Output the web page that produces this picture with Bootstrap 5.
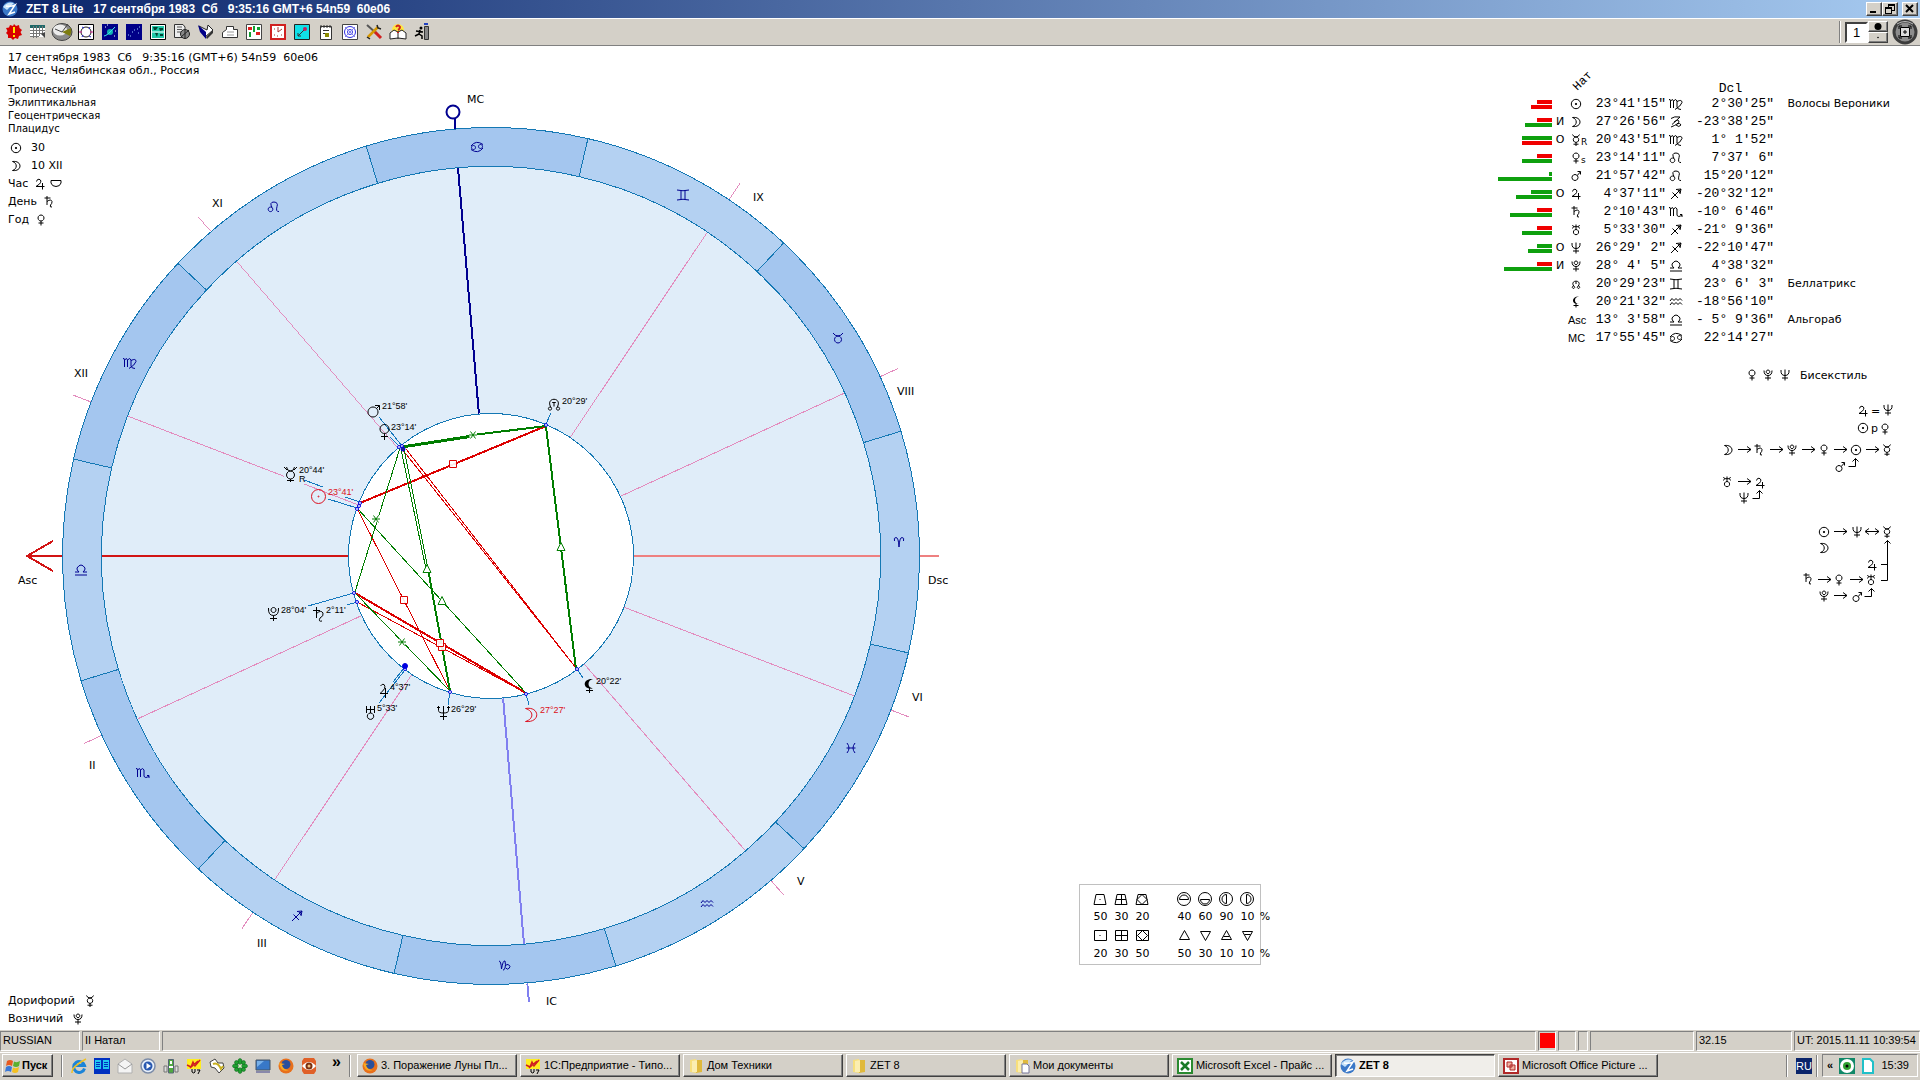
<!DOCTYPE html>
<html lang="ru">
<head>
<meta charset="utf-8">
<meta name="viewport" content="width=device-width, initial-scale=1">
<title>ZET 8 Lite</title>
<link rel="stylesheet" href="https://cdn.jsdelivr.net/npm/bootstrap@5.3.0/dist/css/bootstrap.min.css">
<style>
:root{--face:#d4d0c8;--shade:#808080;--dark:#404040}
body{font:11px/13px "DejaVu Sans",Verdana,sans-serif;color:#000;background:#fff}
button,input{font:inherit;color:#000;border-radius:0}
.ui{font:11px/13px "Liberation Sans",Arial,sans-serif}
.titlebar{height:18px;background:linear-gradient(90deg,#0a246a,#a6caf0);color:#fff;font:bold 12px/16px "Liberation Sans",Arial,sans-serif;white-space:pre;padding:0 2px 0 2px}
.raised{background:var(--face);border:1px solid;border-color:#fff var(--dark) var(--dark) #fff;box-shadow:inset -1px -1px 0 var(--shade);padding:0}
.sunken{border:1px solid;border-color:var(--shade) #fff #fff var(--shade)}
.capbtn{width:16px;height:14px}
.toolbar{height:28px;background:var(--face);border-top:1px solid #fff;border-bottom:1px solid var(--shade);padding:0 2px 0 2px}
.tool{width:24px;height:24px;border:0;background:none;padding:0}
.tool svg,.quick svg,.task svg,.start svg{display:block}
.pagebox{width:23px;height:21px;border:2px solid;border-color:var(--dark) #fff #fff var(--dark);padding:0 0 0 6px;background:#fff;font-size:13px}
.spin{width:20px;height:11px}
.ink{fill:none;stroke:#000;stroke-width:1}
.gl{width:16px;height:16px;display:inline-block;vertical-align:middle;fill:none;stroke:#000;overflow:visible}
.stack{grid-area:1/1}
.chart{height:100%;width:auto;max-width:100%}
.info{padding:5px 8px 2px;white-space:pre;z-index:1}
.fine{font-size:10px;margin-top:6px}
.rowline{height:18px;line-height:18px}
.planets{width:420px;margin-top:28px;border-collapse:collapse;table-layout:fixed}
.planets td,.planets th{padding:0;height:18px;line-height:18px;font-weight:normal;white-space:pre}
.planets thead th{height:21px;line-height:12px;vertical-align:bottom}
.planets .num{font-family:"Liberation Mono","Courier New",monospace;font-size:13px;text-align:right}
.tilt{display:block;width:22px;transform:rotate(-45deg);font-family:"Liberation Mono","Courier New",monospace;font-size:12px;line-height:12px;margin-bottom:8px;margin-left:4px}
.bars{display:flex;flex-direction:column;align-items:flex-end;gap:1px}
.bars i{height:4px;background:#0ea00e}
.bars i.r{background:#f00000}
.sub{font-size:9px;margin-left:-3px}
.stats{display:grid;grid-template-columns:repeat(8,21px) 14px;width:182px;height:81px;border:1px solid #c0c0c0;padding:6px 0 0 10px;margin:0 0 65px 119px;text-align:center}
.stats svg{width:21px;height:18px;fill:none;stroke:#000}
.stats span{height:18px;line-height:15px}
.status{height:22px;background:var(--face);padding-top:1px;gap:2px}
.status>div{height:20px;padding:2px;white-space:nowrap}
.taskbar{height:28px;background:var(--face);border-top:1px solid #fff;padding:0 2px 2px}
.start{width:51px;height:23px;font-weight:bold;gap:1px;padding-left:2px}
.sep{width:2px;height:22px;border-left:1px solid var(--shade);border-right:1px solid #fff}
.quick a{width:23px}
.tasks{gap:3px;padding-left:2px}
.task{width:160px;height:23px;padding:0 4px;gap:3px;text-align:left;white-space:nowrap}
.task.on{border-color:var(--dark) #fff #fff var(--dark);background:#f0eeea;box-shadow:inset 1px 1px 0 var(--shade);font-weight:bold}
.lang{background:#0a246a;color:#fff;width:16px;height:16px;line-height:16px;text-align:center}
.tray{width:96px;height:23px;padding:0 4px}
.ring{stroke:#1478b4;fill:none}
.sg{stroke:#000090;fill:none}
.cusp{stroke:#e38cbe}
.lead1{stroke:#1478be}
.gr{stroke:#007d00}
.rd{stroke:#dc0000}
.deg{font:9px "Liberation Sans",Arial,sans-serif}
.mk{fill:#fff;fill-opacity:.9}
.dots{fill:#fff;stroke:#0000e0}
.crisp{shape-rendering:crispEdges}
</style>
<script src="https://cdn.jsdelivr.net/npm/bootstrap@5.3.0/dist/js/bootstrap.bundle.min.js"></script>
</head>
<body class="vh-100 d-flex flex-column overflow-hidden">

<svg width="0" height="0" class="position-absolute" aria-hidden="true">
<defs>
<g id="sun"><circle r="4.700"/><circle r=".7" fill="currentColor"/></g>
<path id="moon" d="M-3.500-4.500C6.500-5.800 6.500 5.800-3.500 4.500C1.500 3 1.500-3-3.500-4.500Z"/>
<path id="mercury" d="M-3.500-5.500Q-2.500-3 0-3Q2.500-3 3.500-5.500M0-3A2.700 2.700 0 1 0 .01-3M0 2.400V6M-2.500 4.200H2.500"/>
<path id="venus" d="M0-5A3 3 0 1 0 .01-5M0 1V5.500M-2.500 3H2.500"/>
<path id="mars" d="M-1-1.500A3 3 0 1 0-.99-1.500M1.200-.5L4.500-4.200M1.500-4.500H4.500V-1.500"/>
<path id="jupiter" d="M-3.500-2.500Q-3-5-1-4.800Q2.500-3.500-.5 0L-4 2.500H4.500M2.500-1V5.500"/>
<path id="saturn" d="M-2-6V3M-4.500-4H1.500M-2-.5Q2-3.500 3-.5Q3.200 1.500 1.500 3Q.5 5.500 3 5"/>
<path id="uranus" d="M-3.500-5Q-1.500-3.500-3.500-1.500M3.500-5Q1.500-3.500 3.500-1.500M-2.500-3.300H2.500M0-5.500V-.5M0-.5A2.600 2.600 0 1 0 .01-.5"/>
<path id="neptune" d="M-4-5Q-4.500 .5 0 .5Q4.500 .5 4-5M0-5.500V5.500M-3 3H3"/>
<path id="pluto" d="M0-5A1.800 1.800 0 1 0 .01-5M-4-4.500Q-4 .5 0 .5Q4 .5 4-4.500M0 .5V5.500M-3 3H3"/>
<path id="node" d="M-2.300 2C-6.500-4.500 6.500-4.500 2.300 2M-2.500 2A1.200 1.200 0 1 0-2.490 2M2.500 2A1.200 1.200 0 1 0 2.510 2M0-2.500V0"/>
<path id="nodebig" d="M-3 3.500C-9.500-7.500 9.500-7.500 3 3.500M-4 3A1.600 1.600 0 1 0-3.990 3M4 3A1.600 1.600 0 1 0 4.010 3M-1.800-1.500H1.800M0-1.500V2.500"/>
<g id="lilith"><path fill="currentColor" stroke="none" d="M3-5.500C-5-6-5 3 3 2Q-1 1.500-1-1.800Q-1-5 3-5.500Z"/><path d="M0 1.500V5.500M-2.500 3.500H2.500"/></g>
<path id="aries" d="M-4.500-1Q-5.500-4.500-3-4.500Q-.5-4.500 0 5Q.5-4.500 3-4.500Q5.500-4.500 4.500-1"/>
<path id="taurus" d="M-5-5Q-3-2 0-2Q3-2 5-5M0-2A3.500 3.500 0 1 0 .01-2"/>
<path id="gemini" d="M-6-5Q0-3.500 6-5M-6 5Q0 3.500 6 5M-2-4V4M2-4V4"/>
<path id="cancer" d="M-6-1Q-1-7.500 6-2.500M6 1Q1 7.500-6 2.500M-3.500-1.500A2 2 0 1 0-3.490-1.500M3.500-2.500A2 2 0 1 0 3.510-2.500"/>
<path id="leo" d="M-3.500 0A2.300 2.300 0 1 0-3.490 0M-2 .5Q-5-5 0-5Q4.500-4.500 3-.5Q1.500 5 5 4.500"/>
<path id="virgo" d="M-7-4.500Q-5.500-5-5.500-3V4M-5.500-3Q-3-6-2.500-3V4M-2.500-3Q0-6 1-3V3Q1.500 5.500 5 5.500M1-2.500Q6-5 6-1.500Q5 2-1 5.500"/>
<path id="libra" d="M-6 5H6M-6 2H-2Q-4.500 0-4-2Q-2-5 0-5Q2-5 4-2Q4.500 0 2 2H6"/>
<path id="scorpio" d="M-7-4.500Q-5.500-5-5.500-3V4M-5.500-3Q-3-6-2.500-3V4M-2.500-3Q0-6 1-3V3Q2 6 6 3M4 2.500L6 2.500V5"/>
<path id="sagittarius" d="M-5 5L5-5M0-4.500L5-5L4 0M-3.500-1.500L2 4M2-4L4-1"/>
<path id="capricorn" d="M-5-4Q-3-4-2.500 4Q-1-5 1-4Q2 0 1 3Q0 5.500-1 5M1.500 1A2.200 2.200 0 1 1 1.800 3"/>
<path id="capricorn2" d="M-5-3.500Q-2-6 4-5L-4 2.500M-2 0Q2-3 3-1Q3 2-5 5M1 2Q4 0 5 3Q3 6 0 3"/>
<path id="aquarius" d="M-6-1L-4-3.500L-2-1.500L0-3.500L2-1.500L4-3.500L6-1.500M-6 3L-4 .5L-2 2.500L0 .5L2 2.500L4 .5L6 2.500"/>
<path id="pisces" d="M-4-5Q0 0-4 5M4-5Q0 0 4 5M-4.500 0H4.500"/>
<path id="ar" d="M0 0H13M9-3L13 0L9 3"/>
<path id="hook" d="M-7 8H0V0M-3 3L0 0L3 3"/>
<path id="sq" d="M-3.500-3.500H3.500V3.500H-3.500Z"/>
<path id="tri" d="M0-4.500L4 3.500H-4Z"/>
<path id="star" d="M-4 0H4M-2.500-3.500L2.500 3.500M2.500-3.500L-2.500 3.500"/>
<path id="sector" d="M428.500 0A428.500 428.500 0 0 0 371.100-214.250L337.300-194.750A389.500 389.500 0 0 1 389.500 0Z"/>
<g id="orb"><circle cx="8" cy="8" r="7.500" fill="#3a78c8"/><path d="M1 6Q5 0 12 2L5 9Z" fill="#c8e4fa"/><path d="M4 5Q9 6 13 4L7 13L13 11" fill="none" stroke="#fff" stroke-width="1.500"/></g>
<g id="fox"><circle cx="8" cy="8" r="7.500" fill="#e8701c"/><circle cx="8" cy="6.500" r="4.500" fill="#2a4f9c"/><path d="M1 5Q3 15 11 12Q5 12 4 7L7 6Z" fill="#f8a820"/></g>
<g id="onec"><path d="M1 1H15V11H1Z" fill="#ffee20"/><path d="M1 7L5 9L7 4L9 8L14 2M4 10L12 3" stroke="#d02020" stroke-width="1.500" fill="none"/><path d="M6 11V14Q8 16 9 14V11M11 12H14L12 16" stroke="#000" fill="none"/></g>
<g id="folder"><path d="M2 2L8 1V15L2 14Z" fill="#f7df7c"/><path d="M8 2H14V14L8 15Z" fill="#e0b93c"/><path d="M4 3L9 2V14H4Z" fill="#fbeeb0"/></g>
</defs>
</svg>

<header class="titlebar d-flex align-items-center flex-shrink-0">
  <svg width="16" height="16" viewBox="0 0 16 16" class="me-2"><use href="#orb"/></svg><span class="flex-grow-1">ZET 8 Lite   17 сентября 1983  Сб   9:35:16 GMT+6 54n59  60e06</span>
  <button class="raised capbtn d-flex" aria-label="Свернуть"><svg width="14" height="12"><path d="M3 9H9" stroke="#000" stroke-width="2"/></svg></button>
  <button class="raised capbtn d-flex me-1" aria-label="Восстановить"><svg width="14" height="12" class="ink crisp"><path d="M5 4V1.500H11V7H9M5 2.500H11M2.500 4.500H8.500V10H2.500ZM2.500 5.500H8.500"/></svg></button>
  <button class="raised capbtn d-flex" aria-label="Закрыть"><svg width="14" height="12"><path d="M3 2L10 9M10 2L3 9" stroke="#000" stroke-width="2"/></svg></button>
</header>

<nav class="toolbar d-flex align-items-center flex-shrink-0" aria-label="Инструменты">
  <button class="tool" aria-label="Стоп"><svg width="24" height="24" viewBox="-4 -4 24 24"><path d="M8 0L10 2L13 1L13.500 4L16 6L14.500 8L16 11L13 12L12 15L9 14L7 16L5 14L2 14L2 11L0 9L1.500 7L0 4L3 3.500L4 1L7 2Z" fill="#d80000"/><path d="M8 3V9M8 11V13" stroke="#ffe800" stroke-width="2"/></svg></button>
  <button class="tool" aria-label="Таблица"><svg width="24" height="24" viewBox="-4 -4 24 24"><path d="M0 1H15V13H0Z" fill="#fff"/><path d="M0 1H15V4H0Z" fill="#206868"/><path d="M0 6.500H15M0 9.500H12M0 12.500H9M3.500 2V14M6.500 2V14M9.500 2V12M12.500 2V10" stroke="#777"/><path d="M11 10L15 14V8" fill="#444"/></svg></button>
  <button class="tool" aria-label="Радар"><svg width="24" height="24" viewBox="-4 -4 24 24"><ellipse cx="8" cy="8" rx="10" ry="8.500" fill="#8a8a8a" stroke="#444"/><ellipse cx="6" cy="6" rx="7" ry="5.500" fill="#ececec"/><path d="M8 8L17 4Q18 8 16 12Z" fill="#7c7c10"/><path d="M14 0L8 8L1 5" stroke="#444" fill="none"/></svg></button>
  <button class="tool" aria-label="Карта"><svg width="24" height="24" viewBox="-4 -4 24 24"><path d="M.5 .5H15.500V15.500H.5Z" fill="#fff" stroke="#000"/><circle cx="8" cy="8" r="5" fill="none" stroke="#222"/><path d="M1 8H4M12 8H15" stroke="#d02090"/><path d="M4 3L6 4M11 12L13 13M4 13L5 11M12 3L11 5" stroke="#2020d0"/></svg></button>
  <button class="tool" aria-label="Планета"><svg width="24" height="24" viewBox="-4 -4 24 24"><path d="M0 0H16V16H0Z" fill="#000088"/><circle cx="8" cy="8" r="3" fill="#10b0b0"/><path d="M2 12Q5 12 13 3" stroke="#40f0f0" fill="none"/><path d="M3 3h1M12 12h1M5 1h1M13 7h1" stroke="#fff"/></svg></button>
  <button class="tool" aria-label="Небо"><svg width="24" height="24" viewBox="-4 -4 24 24"><path d="M0 0H16V16H0Z" fill="#000088"/><path d="M2 11h1M4 12h1M6 8h1M8 6h1M11 5h1M13 3h1M12 9h1" stroke="#9cf"/></svg></button>
  <button class="tool" aria-label="Атлас"><svg width="24" height="24" viewBox="-4 -4 24 24"><path d="M.5 .5H15.500V15.500H.5Z" fill="#fff" stroke="#000"/><path d="M2 2H14V14H2Z" fill="#20c8a8"/><path d="M3 3H8L6 6H4ZM9 4H13V6L10 7ZM5 9H8L7 13ZM10 10H13V12H10Z" fill="#043"/><path d="M2 8H14" stroke="#fff"/></svg></button>
  <button class="tool" aria-label="Документ"><svg width="24" height="24" viewBox="-4 -4 24 24"><path d="M.5 .5H9L11 3V13.500H.5Z" fill="#eee" stroke="#333"/><path d="M3 3H8M3 5.500H8M3 8H8" stroke="#555"/><circle cx="11" cy="10" r="4.500" fill="#888" stroke="#222"/><path d="M7 13L15 6M11 6V15" stroke="#222"/></svg></button>
  <button class="tool" aria-label="Книга"><svg width="24" height="24" viewBox="-4 -4 24 24"><path d="M1 2L7 13L15 6L10 1L9 6Z" fill="#fff" stroke="#222"/><path d="M0 1L8 8V15L2 8Z" fill="#000088"/><path d="M9 15L15 9V6L8 13Z" fill="#333"/></svg></button>
  <button class="tool" aria-label="Папка"><svg width="24" height="24" viewBox="-4 -4 24 24"><path d="M4.500 2.500H11.500V5.500H15.500V13.500H.5V8.500L4.500 5.500Z" fill="#fff" stroke="#333"/><path d="M5 8H12M5 11H12" stroke="#999"/></svg></button>
  <button class="tool" aria-label="Аспекты"><svg width="24" height="24" viewBox="-4 -4 24 24"><path d="M.5 .5H15.500V15.500H.5Z" fill="#fff" stroke="#444"/><path d="M2 3H6V6H2ZM10 8H14V11H10Z" fill="#e02020"/><path d="M7 2H9V8H7ZM11 3H14V6H11ZM3 8H5V13H3Z" fill="#10a030"/></svg></button>
  <button class="tool" aria-label="График"><svg width="24" height="24" viewBox="-4 -4 24 24"><path d="M1 1H15V15H1Z" fill="#fff" stroke="#d02020" stroke-width="2"/><path d="M8 3V8L12 5M4 5h1M4 11h1M11 11h1M7 12h1" stroke="#a33" fill="none"/></svg></button>
  <button class="tool" aria-label="Связь"><svg width="24" height="24" viewBox="-4 -4 24 24"><path d="M.5 .5H15.500V15.500H.5Z" fill="#10e0e8" stroke="#222"/><path d="M4 12L11 5M4 9V12H7" stroke="#333" fill="none"/><circle cx="11" cy="5" r="2" fill="#c02060"/></svg></button>
  <button class="tool" aria-label="Заметки"><svg width="24" height="24" viewBox="-4 -4 24 24"><path d="M2.500 2.500H13.500V15.500H2.500Z" fill="#fff" stroke="#333"/><path d="M3 1V4M6 1V4M9 1V4M12 1V4M5 6.500H11M5 9.500H8" stroke="#333"/><path d="M7 9H11V13H7Z" fill="#8b8b00"/></svg></button>
  <button class="tool" aria-label="Круг"><svg width="24" height="24" viewBox="-4 -4 24 24"><path d="M.5 .5H15.500V15.500H.5Z" fill="#fff" stroke="#444"/><circle cx="8" cy="8" r="5.500" fill="none" stroke="#3030e0"/><circle cx="8" cy="8" r="2.500" fill="none" stroke="#3030e0"/><path d="M3 3L13 13M13 3L3 13" stroke="#8080f0"/></svg></button>
  <button class="tool" aria-label="Настройки"><svg width="24" height="24" viewBox="-4 -4 24 24"><path d="M1 1L10 9" stroke="#555" stroke-width="2"/><path d="M9 8L15 14" stroke="#d02020" stroke-width="3"/><path d="M12 3L2 13" stroke="#d89800" stroke-width="2.500"/><path d="M11 1L12 4L15 5M1 13L4 15" stroke="#222" stroke-width="1.500" fill="none"/></svg></button>
  <button class="tool" aria-label="Справка"><svg width="24" height="24" viewBox="-4 -4 24 24"><circle cx="8" cy="6" r="6" fill="#ffe640"/><path d="M0 9L4 6L8 8L12 6L16 9V15L8 14L0 15Z" fill="#fff" stroke="#222"/><path d="M8 9V15" stroke="#222"/><path d="M6 3Q8 0 10 3Q10 5 8 6M8 8V9" stroke="#d02020" stroke-width="2" fill="none"/></svg></button>
  <button class="tool" aria-label="Выход"><svg width="24" height="24" viewBox="-4 -4 24 24"><path d="M10.500 2.500H14.500V15.500H10.500Z" fill="#888" stroke="#333"/><path d="M10 0h4" stroke="#2040c0" stroke-width="2"/><path d="M6 6L5 10L8 12V15M5 10L1 12M2 7L9 8" stroke="#000" stroke-width="1.500" fill="none"/><circle cx="7" cy="4" r="1.500"/></svg></button>
  <div class="ms-auto d-flex align-items-center ui">
    <div class="sep me-1"></div>
    <input class="pagebox" type="text" value="1" aria-label="Номер карты">
    <div class="d-flex flex-column me-1"><button class="raised spin d-flex justify-content-center" aria-label="Больше"><svg width="10" height="9"><circle cx="5" cy="4.500" r="3.500"/></svg></button><button class="raised spin d-flex justify-content-center" aria-label="Меньше"><svg width="10" height="9"><circle cx="5" cy="4.500" r=".8"/></svg></button></div>
    <svg width="26" height="26" viewBox="-13 -13 26 26"><circle r="12.500" fill="#3c3c3c"/><circle r="9.500" fill="#8c8c8c"/><path d="M-8-8Q0-13 8-8" stroke="#bbb" fill="none"/><path d="M-4.500-4.500H4.500V4.500H-4.500Z" fill="#ddd" stroke="#000"/><path d="M-2 0H2M0-2V2M-6-3V-6H-3M3-6H6V-3M6 3V6H3M-3 6H-6V3" stroke="#000" fill="none"/></svg>
  </div>
</nav>

<main class="d-flex flex-grow-1 overflow-hidden">
  <div class="d-grid h-100">
    <div class="stack info d-flex flex-column">
      <div>17 сентября 1983  Сб   9:35:16 (GMT+6) 54n59  60e06</div>
      <div>Миасс, Челябинская обл., Россия</div>
      <div class="fine mb-1">Тропический
Эклиптикальная
Геоцентрическая
Плацидус</div>
      <div class="rowline"><svg class="gl" viewBox="-8 -8 16 16"><use href="#sun"/></svg>  30</div>
      <div class="rowline"><svg class="gl" viewBox="-8 -8 16 16"><use href="#moon"/></svg>  10 XII</div>
      <div class="rowline">Час <svg class="gl" viewBox="-8 -8 16 16"><use href="#jupiter"/></svg><svg class="gl" viewBox="-8 -8 16 16"><path d="M-5-3.500H5V-1Q4 2.500 0 2.500Q-4 2.500-5-1Z"/></svg></div>
      <div class="rowline">День <svg class="gl" viewBox="-8 -8 16 16"><use href="#saturn"/></svg></div>
      <div class="rowline">Год <svg class="gl" viewBox="-8 -8 16 16"><use href="#venus"/></svg></div>
      <div class="rowline mt-auto">Дорифорий  <svg class="gl" viewBox="-8 -8 16 16"><use href="#mercury"/></svg></div>
      <div class="rowline">Возничий  <svg class="gl" viewBox="-8 -8 16 16"><use href="#pluto"/></svg></div>
    </div>

    <svg class="stack chart" viewBox="0 46 960 984" role="img" aria-label="Натальная карта">
      <circle cx="491" cy="556" r="389.500" fill="#e0edf9"/>
      <g transform="translate(491 556)" class="ring crisp">
        <use href="#sector" fill="#b4d1f2" transform="rotate(13.070)"/>
        <use href="#sector" fill="#a4c6ef" transform="rotate(-16.930)"/>
        <use href="#sector" fill="#b4d1f2" transform="rotate(-46.930)"/>
        <use href="#sector" fill="#a4c6ef" transform="rotate(-76.930)"/>
        <use href="#sector" fill="#b4d1f2" transform="rotate(-106.930)"/>
        <use href="#sector" fill="#a4c6ef" transform="rotate(-136.930)"/>
        <use href="#sector" fill="#b4d1f2" transform="rotate(-166.930)"/>
        <use href="#sector" fill="#a4c6ef" transform="rotate(-196.930)"/>
        <use href="#sector" fill="#b4d1f2" transform="rotate(-226.930)"/>
        <use href="#sector" fill="#a4c6ef" transform="rotate(-256.930)"/>
        <use href="#sector" fill="#b4d1f2" transform="rotate(-286.930)"/>
        <use href="#sector" fill="#a4c6ef" transform="rotate(-316.930)"/>
        <circle r="142.500" fill="#fff"/>
      </g>
      <g transform="translate(491 556)" class="cusp crisp">
        <path transform="rotate(-24.740)" d="M143 0H389M429 0H448"/>
        <path transform="rotate(-56.250)" d="M143 0H389M429 0H448"/>
        <path transform="rotate(-130.800)" d="M143 0H389M429 0H448"/>
        <path transform="rotate(-158.940)" d="M143 0H200M222 0H389M429 0H448"/>
        <path transform="rotate(-204.740)" d="M143 0H389M429 0H448"/>
        <path transform="rotate(-236.250)" d="M143 0H389M429 0H448"/>
        <path transform="rotate(-310.800)" d="M143 0H389M429 0H448"/>
        <path transform="rotate(-338.940)" d="M143 0H389M429 0H448"/>
        <path d="M143 0H389M429 0H448" stroke="#ee8080" stroke-width="2"/>
        <path d="M-143 0H-389M-429 0H-464M-438-15L-464 0L-438 15" stroke="#d21414" stroke-width="2" fill="none"/>
        <path transform="rotate(-94.860)" d="M143 0H389" stroke="#000090" stroke-width="2"/>
        <path transform="rotate(-274.860)" d="M143 0H389M429 0H448" stroke="#8080f0" stroke-width="2"/>
      </g>
      <g stroke="#000090" stroke-width="2" fill="none"><circle cx="453" cy="112" r="6.500"/><path d="M455 119V129"/></g>

      <g class="sg">
        <use href="#cancer" x="477" y="147"/><use href="#leo" x="274" y="207"/><use href="#virgo" x="130" y="363"/>
        <use href="#libra" x="81" y="570"/><use href="#gemini" x="683" y="195"/><use href="#taurus" x="838" y="338"/>
        <use href="#aries" x="899" y="542"/><use href="#pisces" x="851" y="748"/><use href="#aquarius" x="707" y="904"/>
        <use href="#capricorn" x="504" y="965"/><use href="#sagittarius" x="297" y="916"/><use href="#scorpio" x="143" y="773"/>
      </g>
      <g font-size="11">
        <text x="467" y="103">MC</text><text x="212" y="207">XI</text><text x="74" y="377">XII</text><text x="753" y="201">IX</text>
        <text x="897" y="395">VIII</text><text x="928" y="584">Dsc</text><text x="18" y="584">Asc</text><text x="912" y="701">VI</text>
        <text x="797" y="885">V</text><text x="257" y="947">III</text><text x="89" y="769">II</text><text x="546" y="1005">IC</text>
      </g>

      <g class="lead1 crisp">
        <path d="M379 417L402 446M390 437L399 446M304 480L323 487M345 497L360 502M328 499L357 508M308 606L354 593M347 605L357 602M393 682L404 668M379 703L405 670M448 705L450 692M529 705L526 694M583 678L577 669M551 413L546 424"/>
      </g>
      <g class="rd crisp" fill="none">
        <path d="M360 503L546 426" stroke-width="2"/><path d="M355 593L526 693" stroke-width="2"/>
        <path d="M402 449L576 668M406 449L576 668M357 508L450 691M357 602L526 693"/>
      </g>
      <g class="gr crisp" fill="none">
        <path d="M402 447L473 436" stroke-width="3"/><path d="M473 435L546 426" stroke-width="2"/>
        <path d="M546 427L576 669" stroke-width="2"/><path d="M428 569L450 691" stroke-width="2"/>
        <path d="M401 449L426 569M404 449L428 569M400 448L355 592M357 508L526 693M355 593L450 691"/>
      </g>
      <g class="gr">
        <g stroke="#fff" stroke-width="3"><use href="#star" x="473" y="435"/><use href="#star" x="376" y="519"/><use href="#star" x="402" y="642"/></g>
        <use href="#star" x="473" y="435"/><use href="#star" x="376" y="519"/><use href="#star" x="402" y="642"/>
        <g fill="#fff"><use href="#tri" x="561" y="547"/><use href="#tri" x="427" y="569"/><use href="#tri" x="442" y="601"/></g>
      </g>
      <g class="rd mk"><use href="#sq" x="453" y="464"/><use href="#sq" x="404" y="600"/><use href="#sq" x="442" y="647"/><use href="#sq" x="440" y="643"/></g>
      <g class="dots">
        <circle cx="546" cy="425" r="1.500"/><circle cx="399" cy="447" r="1.500"/><circle cx="402" cy="446" r="1.500"/><circle cx="403" cy="449" r="2" fill="#202080"/>
        <circle cx="360" cy="503" r="1.500"/><circle cx="359" cy="506" r="1.500"/><circle cx="357" cy="509" r="1.500"/><circle cx="354" cy="593" r="1.500"/><circle cx="357" cy="602" r="1.500"/>
        <circle cx="405" cy="669" r="1.500"/><circle cx="405" cy="666" r="2.500" fill="#0000e0"/><circle cx="450" cy="692" r="1.500"/><circle cx="526" cy="694" r="1.500"/><circle cx="577" cy="669" r="1.500"/>
      </g>

      <g class="ink">
        <path d="M373 407A5 5 0 1 0 373.010 407M376.500 408.500L379.500 405.500M375 405.500H379.500V410"/>
        <path d="M384.500 424.500A4.500 4.500 0 1 0 384.510 424.500M384.500 433.500V440M381 436.500H388"/>
        <use href="#nodebig" x="554" y="404"/>
        <path d="M284 467L287 470M297 467L294 470M286.500 467Q287 471 290.500 471Q294 471 294.500 467M290.500 471A4 4 0 1 0 290.510 471M290.500 479V482M287 480.500H294"/>
        <path d="M273.500 607.500A2.500 2.500 0 1 0 273.510 607.500M268.500 608Q268 615.500 273.500 615.500Q279 615.500 278.500 608M273.500 615.500V621M270 618.500H277"/>
        <path d="M316.500 607V618M313 610.500H320M316.500 613.500Q321 609.500 323 613Q324 616 320 618Q318 622 322 621"/>
        <path d="M380.500 686Q382 683.500 384 684.500Q387 688 380 693.500H388M385.500 688V698"/>
        <path d="M366.500 706V713M374.500 706V713M366.500 709.500H374.500M370.500 706V713M370.500 713A3.200 3.200 0 1 0 370.510 713"/>
        <path d="M438.500 706V710.500Q438.500 713 443.500 713Q448.500 713 448.500 710.500V706M443.500 706V720M440 716.500H447M437 707.500H440M447 707.500H450"/>
        <path fill="#000" stroke="none" d="M593 679C582 678 582 690 593 688.500Q588.500 687.500 588.500 684Q588.500 680 593 679Z"/><path d="M589.500 688V693M586 690.500H593"/>
      </g>
      <g fill="none" stroke="#dc1020"><circle cx="318.500" cy="496.500" r="7"/><circle cx="318.500" cy="496.500" r=".5"/><path d="M525.500 708.500C540 706 541 723 525.500 721.500C534 719 534 711 525.500 708.500Z"/></g>
      <g class="deg">
        <text x="382" y="409">21°58'</text><text x="391" y="430">23°14'</text><text x="562" y="404">20°29'</text><text x="299" y="473">20°44'</text><text x="299" y="482">R</text>
        <text x="281" y="613">28°04'</text><text x="326" y="613">2°11'</text><text x="390" y="690">4°37'</text><text x="377" y="711">5°33'</text>
        <text x="451" y="712">26°29'</text><text x="596" y="684">20°22'</text>
        <g fill="#dc1020"><text x="328" y="495">23°41'</text><text x="540" y="713">27°27'</text></g>
      </g>
    </svg>
  </div>

  <div class="flex-grow-1 d-flex align-items-end">
    <div class="stats">
      <svg viewBox="-10 -8 21 18"><path d="M-6 5.500L-4-4.500H4L6 5.500ZM0 0V1"/></svg><svg viewBox="-10 -8 21 18"><path d="M-6 5.500L-4-4.500H4L6 5.500ZM.5-4.500V5.500M-5 .5H5"/></svg><svg viewBox="-10 -8 21 18"><path d="M-6 5.500L-4-4.500H4L6 5.500ZM0-4.500L5 .5L0 5.500L-5 .5Z"/></svg><i></i>
      <svg viewBox="-10 -8 21 18"><circle r="6.500"/><path d="M-4.500 .5A4.500 4.500 0 0 1 4.500 .5Z"/></svg><svg viewBox="-10 -8 21 18"><circle r="6.500"/><path d="M-4.500 .5A4.500 4.500 0 0 0 4.500 .5Z"/></svg><svg viewBox="-10 -8 21 18"><circle r="6.500"/><path d="M.5-4.500A4.500 4.500 0 0 0 .5 4.500Z"/></svg><svg viewBox="-10 -8 21 18"><circle r="6.500"/><path d="M-.5-4.500A4.500 4.500 0 0 1-.5 4.500Z"/></svg><i></i>
      <span>50</span><span>30</span><span>20</span><i></i><span>40</span><span>60</span><span>90</span><span>10</span><span>%</span>
      <svg viewBox="-10 -8 21 18"><path d="M-5.500-5.500H6.500V4.500H-5.500ZM0-1V0"/></svg><svg viewBox="-10 -8 21 18"><path d="M-5.500-5.500H6.500V4.500H-5.500ZM.5-5.500V4.500M-5.500-.5H6.500"/></svg><svg viewBox="-10 -8 21 18"><path d="M-5.500-5.500H6.500V4.500H-5.500ZM.5-5.500L5.500-.5L.5 4.500L-4.500-.5Z"/></svg><i></i>
      <svg viewBox="-10 -8 21 18"><path d="M.5-5.500L5.500 3.500H-4.500Z"/></svg><svg viewBox="-10 -8 21 18"><path d="M.5 4.500L5.500-4.500H-4.500Z"/></svg><svg viewBox="-10 -8 21 18"><path d="M.5-5.500L5.500 3.500H-4.500ZM-2.500 .5H3.500"/></svg><svg viewBox="-10 -8 21 18"><path d="M.5 4.500L5.500-4.500H-4.500ZM-2.500-1.500H3.500"/></svg><i></i>
      <span>20</span><span>30</span><span>50</span><i></i><span>50</span><span>30</span><span>10</span><span>10</span><span>%</span>
    </div>
  </div>

  <aside class="me-3 pe-1 flex-shrink-0 d-flex flex-column">
    <table class="planets">
      <colgroup><col style="width:72px"><col style="width:16px"><col style="width:25px"><col style="width:73px"><col style="width:20px"><col style="width:88px"><col></colgroup>
      <thead><tr><th></th><th></th><th><span class="tilt">Нат</span></th><th></th><th></th><th class="num pe-4">Dcl </th><th></th></tr></thead>
      <tbody>
      <tr><td><div class="bars"><i class="r" style="width:15px"></i><i class="r" style="width:21px"></i></div></td><td></td><td><svg class="gl" viewBox="-8 -8 16 16"><use href="#sun"/></svg></td><td class="num">23°41'15"</td><td class="text-center"><svg class="gl" viewBox="-8 -8 16 16"><use href="#virgo"/></svg></td><td class="num">2°30'25"</td><td class="ps-2">&#8194;Волосы Вероники</td></tr>
      <tr><td><div class="bars"><i class="r" style="width:15px"></i><i style="width:27px"></i></div></td><td class="text-center">И</td><td><svg class="gl" viewBox="-8 -8 16 16"><use href="#moon"/></svg></td><td class="num">27°26'56"</td><td class="text-center"><svg class="gl" viewBox="-8 -8 16 16"><use href="#capricorn2"/></svg></td><td class="num">-23°38'25"</td><td></td></tr>
      <tr><td><div class="bars"><i style="width:30px"></i><i class="r" style="width:30px"></i></div></td><td class="text-center">О</td><td><svg class="gl" viewBox="-8 -8 16 16"><use href="#mercury"/></svg><sub class="sub">R</sub></td><td class="num">20°43'51"</td><td class="text-center"><svg class="gl" viewBox="-8 -8 16 16"><use href="#virgo"/></svg></td><td class="num">1° 1'52"</td><td></td></tr>
      <tr><td><div class="bars"><i class="r" style="width:15px"></i><i style="width:30px"></i></div></td><td></td><td><svg class="gl" viewBox="-8 -8 16 16"><use href="#venus"/></svg><sub class="sub">s</sub></td><td class="num">23°14'11"</td><td class="text-center"><svg class="gl" viewBox="-8 -8 16 16"><use href="#leo"/></svg></td><td class="num">7°37' 6"</td><td></td></tr>
      <tr><td><div class="bars"><i style="width:3px"></i><i style="width:54px"></i></div></td><td></td><td><svg class="gl" viewBox="-8 -8 16 16"><use href="#mars"/></svg></td><td class="num">21°57'42"</td><td class="text-center"><svg class="gl" viewBox="-8 -8 16 16"><use href="#leo"/></svg></td><td class="num">15°20'12"</td><td></td></tr>
      <tr><td><div class="bars"><i style="width:21px"></i><i style="width:36px"></i></div></td><td class="text-center">О</td><td><svg class="gl" viewBox="-8 -8 16 16"><use href="#jupiter"/></svg></td><td class="num">4°37'11"</td><td class="text-center"><svg class="gl" viewBox="-8 -8 16 16"><use href="#sagittarius"/></svg></td><td class="num">-20°32'12"</td><td></td></tr>
      <tr><td><div class="bars"><i class="r" style="width:15px"></i><i style="width:42px"></i></div></td><td></td><td><svg class="gl" viewBox="-8 -8 16 16"><use href="#saturn"/></svg></td><td class="num">2°10'43"</td><td class="text-center"><svg class="gl" viewBox="-8 -8 16 16"><use href="#scorpio"/></svg></td><td class="num">-10° 6'46"</td><td></td></tr>
      <tr><td><div class="bars"><i class="r" style="width:15px"></i><i style="width:30px"></i></div></td><td></td><td><svg class="gl" viewBox="-8 -8 16 16"><use href="#uranus"/></svg></td><td class="num">5°33'30"</td><td class="text-center"><svg class="gl" viewBox="-8 -8 16 16"><use href="#sagittarius"/></svg></td><td class="num">-21° 9'36"</td><td></td></tr>
      <tr><td><div class="bars"><i style="width:15px"></i><i style="width:24px"></i></div></td><td class="text-center">О</td><td><svg class="gl" viewBox="-8 -8 16 16"><use href="#neptune"/></svg></td><td class="num">26°29' 2"</td><td class="text-center"><svg class="gl" viewBox="-8 -8 16 16"><use href="#sagittarius"/></svg></td><td class="num">-22°10'47"</td><td></td></tr>
      <tr><td><div class="bars"><i class="r" style="width:15px"></i><i style="width:48px"></i></div></td><td class="text-center">И</td><td><svg class="gl" viewBox="-8 -8 16 16"><use href="#pluto"/></svg></td><td class="num">28° 4' 5"</td><td class="text-center"><svg class="gl" viewBox="-8 -8 16 16"><use href="#libra"/></svg></td><td class="num">4°38'32"</td><td></td></tr>
      <tr><td></td><td></td><td><svg class="gl" viewBox="-8 -8 16 16"><use href="#node"/></svg></td><td class="num">20°29'23"</td><td class="text-center"><svg class="gl" viewBox="-8 -8 16 16"><use href="#gemini"/></svg></td><td class="num">23° 6' 3"</td><td class="ps-2">&#8194;Беллатрикс</td></tr>
      <tr><td></td><td></td><td><svg class="gl" viewBox="-8 -8 16 16"><use href="#lilith"/></svg></td><td class="num">20°21'32"</td><td class="text-center"><svg class="gl" viewBox="-8 -8 16 16"><use href="#aquarius"/></svg></td><td class="num">-18°56'10"</td><td></td></tr>
      <tr><td></td><td></td><td class="ui">Asc</td><td class="num">13° 3'58"</td><td class="text-center"><svg class="gl" viewBox="-8 -8 16 16"><use href="#libra"/></svg></td><td class="num">- 5° 9'36"</td><td class="ps-2">&#8194;Альгораб</td></tr>
      <tr><td></td><td></td><td class="ui">MC</td><td class="num">17°55'45"</td><td class="text-center"><svg class="gl" viewBox="-8 -8 16 16"><use href="#cancer"/></svg></td><td class="num">22°14'27"</td><td></td></tr>
      </tbody>
    </table>
    <svg class="align-self-end mt-2" width="180" height="255" viewBox="1720 355 180 255" role="img" aria-label="Цепочки диспозиторов">
      <g class="ink">
        <use href="#venus" x="1752" y="375"/><use href="#pluto" x="1768" y="375"/><use href="#neptune" x="1785" y="375"/>
        <use href="#jupiter" x="1863" y="411"/><use href="#neptune" x="1888" y="410"/>
        <use href="#sun" x="1863" y="428"/><use href="#venus" x="1885" y="429"/>
        <use href="#moon" x="1728" y="450"/><use href="#ar" x="1738" y="449.500"/><use href="#saturn" x="1759" y="450"/><use href="#ar" x="1770" y="449.500"/><use href="#pluto" x="1792" y="450"/><use href="#ar" x="1802" y="449.500"/><use href="#venus" x="1824" y="450"/><use href="#ar" x="1834" y="449.500"/><use href="#sun" x="1856" y="450"/><use href="#ar" x="1866" y="449.500"/><use href="#mercury" x="1887" y="450"/>
        <use href="#mars" x="1840" y="467"/><use href="#hook" x="1855.500" y="458.500"/>
        <use href="#uranus" x="1727" y="482"/><use href="#ar" x="1738" y="481.500"/><use href="#jupiter" x="1760" y="483"/>
        <use href="#neptune" x="1744" y="498"/><use href="#hook" x="1759.500" y="490.500"/>
        <use href="#sun" x="1824" y="532"/><use href="#ar" x="1834" y="531.500"/><use href="#neptune" x="1857" y="532"/><use href="#ar" x="1866" y="531.500"/><path d="M1869 528.500L1865 531.500L1869 534.500"/><use href="#mercury" x="1887" y="532"/>
        <use href="#moon" x="1824" y="548"/>
        <use href="#jupiter" x="1872" y="565"/>
        <path d="M1881 564.500H1887.500M1881 580.500H1887.500V540.500M1884.500 543.500L1887.500 540.500L1890.500 543.500"/>
        <use href="#saturn" x="1808" y="579"/><use href="#ar" x="1818" y="579.500"/><use href="#venus" x="1839" y="580"/><use href="#ar" x="1850" y="579.500"/><use href="#uranus" x="1871" y="580"/>
        <use href="#pluto" x="1824" y="596"/><use href="#ar" x="1834" y="595.500"/><use href="#mars" x="1857" y="597"/><use href="#hook" x="1871.500" y="588.500"/>
      </g>
      <g font-size="11"><text x="1800" y="379">Бисекстиль</text><text x="1871" y="415">=</text><text x="1871" y="432">р</text></g>
    </svg>
  </aside>
</main>

<div class="status ui d-flex flex-shrink-0">
  <div class="sunken" style="width:80px">RUSSIAN</div>
  <div class="sunken" style="width:78px">II Натал</div>
  <div class="sunken flex-grow-1"></div>
  <div class="sunken p-0" style="width:18px"><svg width="16" height="18" class="d-block"><path d="M1 1H16V16H1Z" fill="#f00"/></svg></div>
  <div class="sunken" style="width:18px"></div>
  <div class="sunken" style="width:10px"></div>
  <div class="sunken" style="width:104px"></div>
  <div class="sunken" style="width:96px">32.15</div>
  <div class="sunken" style="width:126px">UT: 2015.11.11 10:39:54</div>
</div>

<footer class="taskbar ui d-flex align-items-center flex-shrink-0">
  <button class="raised start d-flex align-items-center"><svg width="16" height="16" viewBox="0 0 16 16"><path d="M2 3Q5 1 8 3L7 8Q4 6 1 8Z" fill="#e85a20"/><path d="M9 3.500Q12 5 15 3L14 8Q11 10 8 8Z" fill="#5cb030"/><path d="M1 9Q4 7 7 9L6 14Q3 12 0 14Z" fill="#3a78d8"/><path d="M8 9.500Q11 11 14 9L13 14Q10 16 7 14Z" fill="#f4c020"/></svg>Пуск</button>
  <div class="sep ms-2"></div>
  <nav class="quick d-flex ms-2" aria-label="Быстрый запуск">
    <a href="#" aria-label="Internet Explorer"><svg width="16" height="16"><path d="M13.500 10.500A5.500 5.500 0 1 1 13.500 7.500H4" fill="none" stroke="#1c84d8" stroke-width="3"/><path d="M1 15Q0 9 15 1" stroke="#f0c020" stroke-width="1.500" fill="none"/></svg></a>
    <a href="#" aria-label="Менеджер файлов"><svg width="16" height="16"><path d="M0 0H16V16H0Z" fill="#0030c0"/><path d="M1 2H7V11H1ZM9 2H15V11H9Z" fill="#20c8f0"/><path d="M2 4.500H6M2 6.500H6M2 8.500H6M10 4.500H14M10 6.500H14M10 8.500H14" stroke="#0030c0"/></svg></a>
    <a href="#" aria-label="Почта"><svg width="16" height="16"><path d="M1 6L8 1L15 6V15H1Z" fill="#f4f4f4" stroke="#b0b0b0"/><path d="M1 6L8 11L15 6" fill="none" stroke="#999"/></svg></a>
    <a href="#" aria-label="Проигрыватель"><svg width="16" height="16"><circle cx="8" cy="8" r="7" fill="#e8f0fa" stroke="#7c8ca8" stroke-width="1.500"/><circle cx="8" cy="8" r="4.500" fill="#2858b0"/><path d="M6.500 5L11 8L6.500 11Z" fill="#fff"/></svg></a>
    <a href="#" aria-label="Устройство"><svg width="16" height="16"><path d="M5.500 1.500H10.500V15H5.500Z" fill="#50a840" stroke="#567"/><path d="M1 8H4V14H1ZM12 8H15V14H12Z" fill="#ddd" stroke="#777"/><path d="M8 3V6M6 9H10" stroke="#fff" stroke-width="2"/></svg></a>
    <a href="#" aria-label="1С"><svg width="16" height="16"><use href="#onec"/></svg></a>
    <a href="#" aria-label="Обмен"><svg width="16" height="16"><path d="M1 4L6 1L9 5L14 5L15 10L10 15L6 10L2 9Z" fill="#fff" stroke="#444"/><path d="M4 6Q9 4 12 11L14 8" stroke="#c8b020" stroke-width="2" fill="none"/></svg></a>
    <a href="#" aria-label="ICQ"><svg width="16" height="16"><g fill="#20a030" stroke="#0a6018" stroke-width=".5"><ellipse cx="8" cy="3.500" rx="2" ry="3"/><ellipse cx="8" cy="12.500" rx="2" ry="3"/><ellipse cx="3.500" cy="8" rx="3" ry="2"/><ellipse cx="12.500" cy="8" rx="3" ry="2"/><circle cx="4.500" cy="4.500" r="2"/><circle cx="11.500" cy="11.500" r="2"/><circle cx="11.500" cy="4.500" r="2"/><circle cx="4.500" cy="11.500" r="2"/></g><circle cx="8" cy="8" r="1.500" fill="#d0f0c0"/></svg></a>
    <a href="#" aria-label="Рабочий стол"><svg width="16" height="16"><path d="M1 2H15V12H1Z" fill="#3878c8" stroke="#456"/><path d="M1 13H15V15H1Z" fill="#88a"/><path d="M2 3L9 3L2 9Z" fill="#78b0e8"/></svg></a>
    <a href="#" aria-label="Firefox"><svg width="16" height="16"><use href="#fox"/></svg></a>
    <a href="#" aria-label="Просмотр"><svg width="16" height="16"><path d="M3 0H13L15 3V13L13 16H3L1 13V3Z" fill="#e06028"/><path d="M1 8Q8 0 15 8Q8 16 1 8Z" fill="#fff"/><circle cx="8" cy="8" r="3.500" fill="#7a3010"/><circle cx="8" cy="8" r="1.500" fill="#f0c080"/></svg></a>
  </nav>
  <b class="ms-1 ps-1 fs-6 pb-2">»</b>
  <div class="sep ms-2"></div>
  <div class="tasks d-flex">
    <button class="raised task d-flex align-items-center ms-1"><svg width="16" height="16"><use href="#fox"/></svg>3. Поражение Луны Пл...</button>
    <button class="raised task d-flex align-items-center"><svg width="16" height="16"><use href="#onec"/></svg>1С:Предприятие - Типо...</button>
    <button class="raised task d-flex align-items-center"><svg width="16" height="16"><use href="#folder"/></svg>Дом Техники</button>
    <button class="raised task d-flex align-items-center"><svg width="16" height="16"><use href="#folder"/></svg>ZET 8</button>
    <button class="raised task d-flex align-items-center"><svg width="16" height="16"><use href="#folder"/><path d="M8 6H13L15 8V15H8Z" fill="#fff" stroke="#779"/></svg>Мои документы</button>
    <button class="raised task d-flex align-items-center"><svg width="16" height="16"><path d="M1 1H15V15H1Z" fill="#fff" stroke="#2a8a30" stroke-width="2"/><path d="M4 4L12 12M12 4L4 12" stroke="#1a7a28" stroke-width="2.500"/></svg>Microsoft Excel - Прайс ...</button>
    <button class="raised task on d-flex align-items-center"><svg width="16" height="16"><use href="#orb"/></svg>ZET 8</button>
    <button class="raised task d-flex align-items-center"><svg width="16" height="16"><path d="M1 1H15V15H1Z" fill="#fff" stroke="#b02828" stroke-width="2"/><path d="M4 4H9V9H4ZM7 7H12V12H7Z" fill="#f0b0a0" stroke="#b02828"/></svg>Microsoft Office Picture ...</button>
  </div>
  <div class="sep ms-auto me-2"></div>
  <div class="lang me-1">RU</div>
  <div class="sep me-1"></div>
  <div class="sunken tray d-flex align-items-center justify-content-between"><b>«</b><svg width="16" height="16"><path d="M0 0H16V16H0Z" fill="#108868"/><circle cx="8" cy="8" r="7" fill="#fff"/><circle cx="8" cy="8" r="4" fill="#30a030"/><circle cx="8" cy="8" r="1.500"/></svg><svg width="14" height="16"><path d="M2 1H9L12 4V15H2Z" fill="#fff" stroke="#20c0c8" stroke-width="2"/></svg><span class="pe-1">15:39</span></div>
</footer>
</body>
</html>
